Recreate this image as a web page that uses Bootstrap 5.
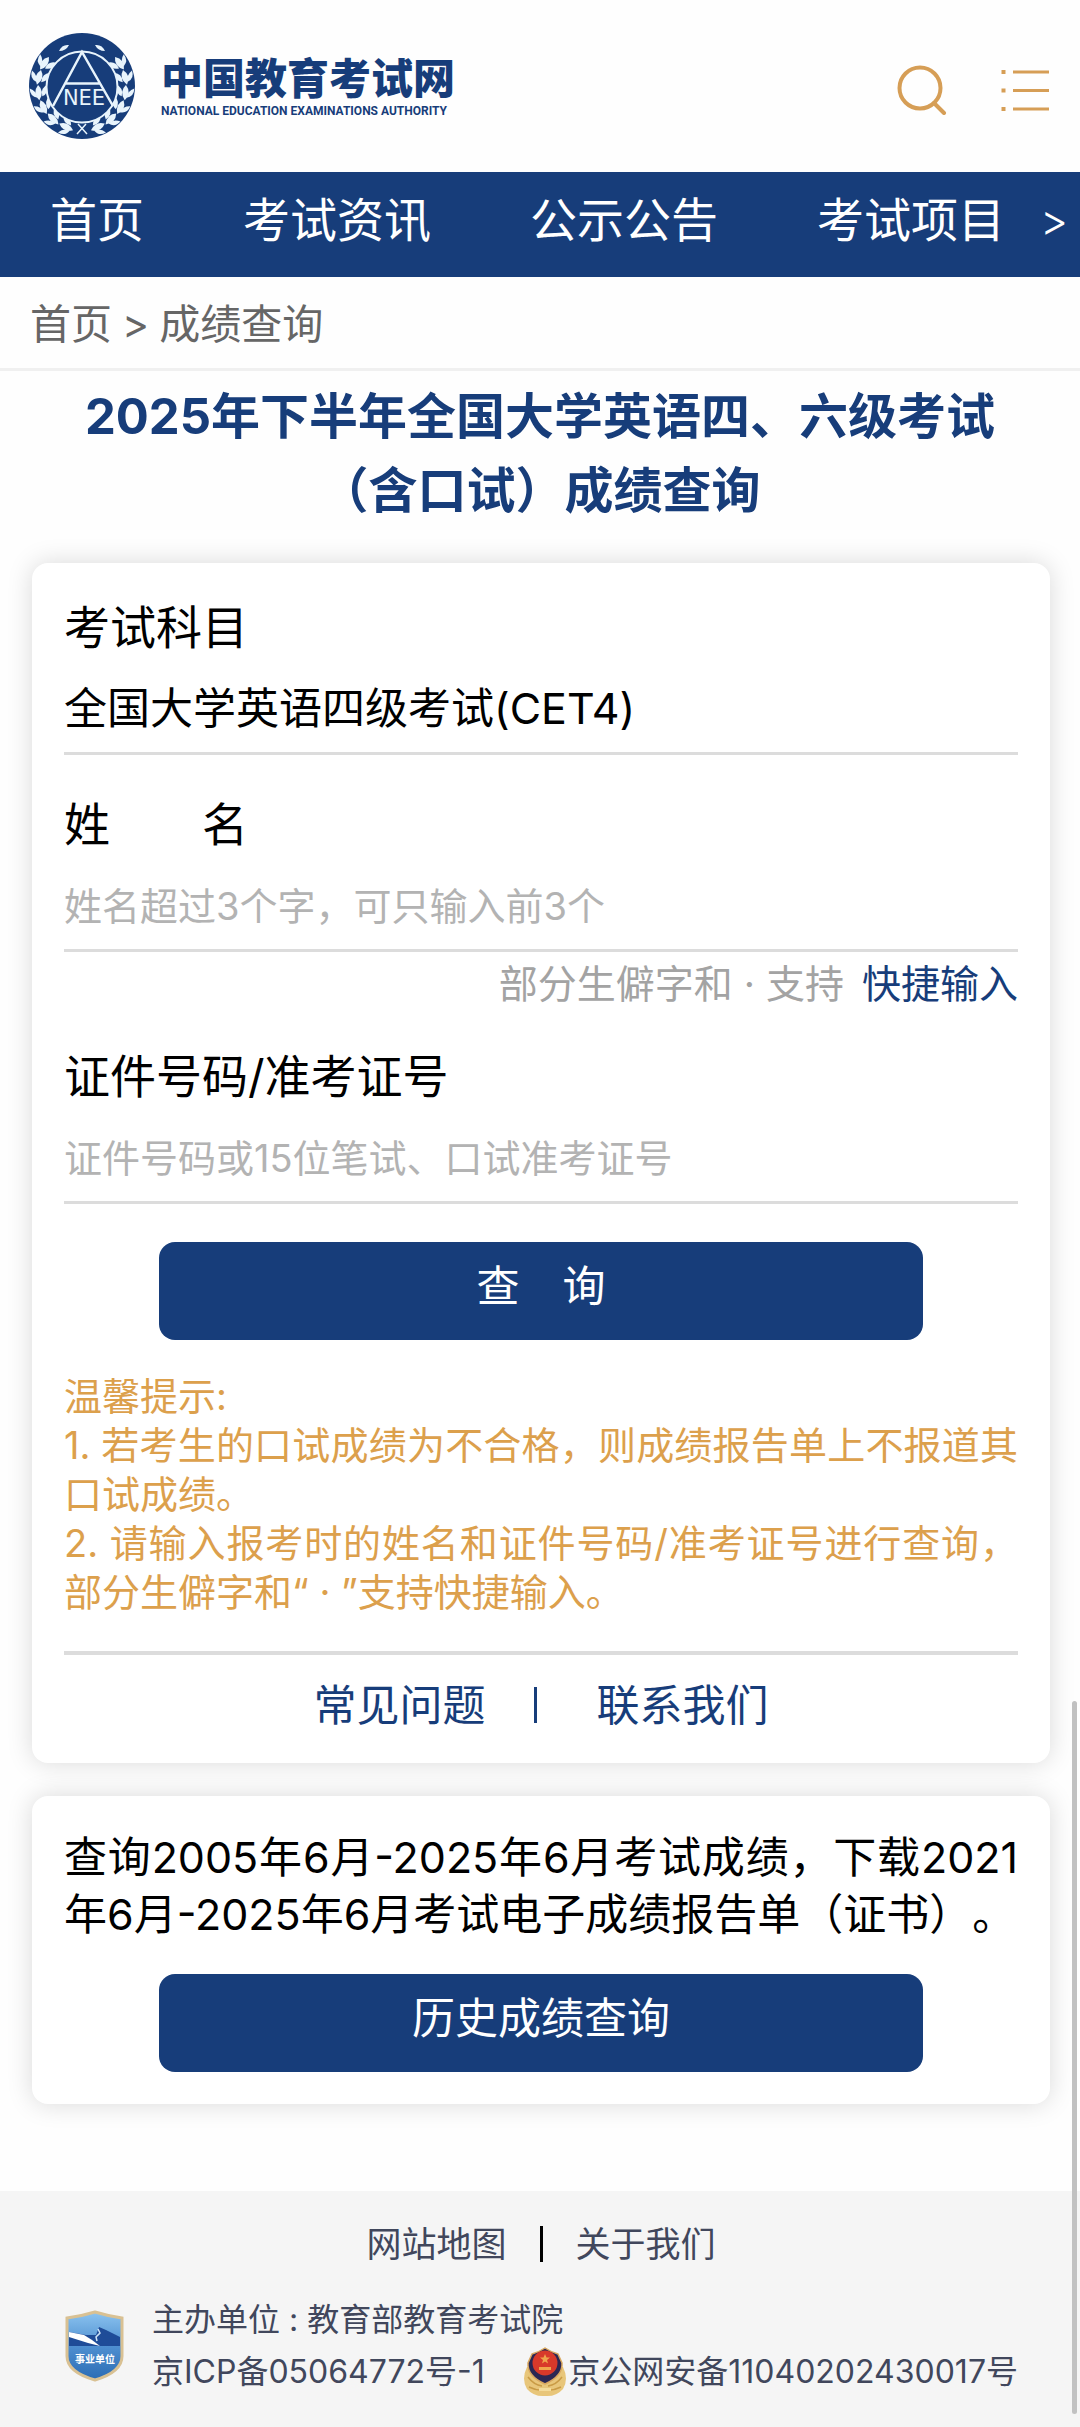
<!DOCTYPE html>
<html lang="zh-CN">
<head>
<meta charset="utf-8">
<meta name="viewport" content="width=device-width, initial-scale=1">
<title>成绩查询 - 中国教育考试网</title>
<link href="https://cdn.jsdelivr.net/npm/bootstrap@5.3.0/dist/css/bootstrap.min.css" rel="stylesheet">
<style>
  :root { --navy: #173d7a; --gold: #dca04c; --rule: #dcdcdc; }
  body { font-family: Inter, "Noto Sans CJK SC", sans-serif; color: #000; background: #fefefe; text-spacing-trim: space-all; }
  a { text-decoration: none; }

  .site-head { padding: 33px 31px 33px 29px; }
  .emblem { width: 106px; height: 106px; }
  .brand-link { gap: 26px; color: var(--navy); }
  .brand-cn { font: 900 42px/50px "Noto Sans CJK SC", sans-serif; }
  .brand-en { font: 700 12px/20px Roboto, sans-serif; }
  .head-tools { gap: 52px; padding-top: 8px; }
  .head-tools svg { width: 50px; height: 50px; }

  .main-nav { background: var(--navy); padding: 0 12px 10px 50px; height: 105px; }
  .main-nav ul { gap: 99px; }
  .main-nav a { color: #fff; font-size: 47px; line-height: 60px; }
  .main-nav .more { font-size: 43px; font-weight: 300; }

  .crumbs { color: #666; font-size: 41px; line-height: 60px; padding: 17px 30px 14px; border-bottom: 3px solid #f0f0f0; gap: 10px; }
  .crumbs a { color: inherit; }

  .page-title { color: var(--navy); font-size: 49px; line-height: 74px; font-weight: 700; padding: 9px 60px 35px; }
  main { padding: 0 30px 0 32px; }
  .panel { border: 0; border-radius: 16px; padding: 33px 32px 32px; background: #fff; box-shadow: 0 0 26px rgba(0,0,0,.15); }
  .query-panel { padding-top: 34px; padding-bottom: 28px; }
  .panel + .panel { margin-top: 33px; }

  .field-label { font-size: 46px; line-height: 60px; display: block; }
  .line-field { height: 98px; padding: 8px 0 0; border: 0; border-bottom: 3px solid var(--rule); border-radius: 0; font-size: 38px; color: #000; background: none; }
  .line-field::placeholder { color: #b3b3b3; opacity: 1; }
  select.line-field { font-size: 43px; }
  .field-gap { margin-top: 39px; }
  .hint { font-size: 39px; line-height: 60px; color: #a3a3a3; gap: 18px; margin: 2px 0 32px; }
  .hint a { color: var(--navy); }

  .btn-navy { --bs-btn-color: #fff; --bs-btn-bg: var(--navy); --bs-btn-hover-color: #fff; --bs-btn-hover-bg: #102f61; width: 80%; height: 98px; border: 0; border-radius: 16px; font-size: 43px; line-height: 60px; padding: 0 0 10px; }
  .query-btn { margin-top: 38px; }
  .tips { color: var(--gold); font-size: 38px; line-height: 49px; text-align: justify; margin: 32px 0 34px; }
  .help-links { border-top: 4px solid var(--rule); padding-top: 20px; font-size: 43px; line-height: 60px; gap: 48px; }
  .help-links a { color: var(--navy); }
  .help-links .bar { width: 3px; height: 36px; margin-right: 12px; background: var(--navy); }
  .history { font-size: 43px; line-height: 57px; text-align: justify; margin-bottom: 31px; }

  .site-foot { background: #f5f5f5; color: #41475c; margin-top: 87px; padding: 28px 62px 29px 64px; font-size: 32px; line-height: 52px; }
  .site-foot a { color: inherit; }
  .foot-links { font-size: 35px; line-height: 50px; gap: 33px; margin-bottom: 25px; }
  .foot-links .bar { width: 3px; height: 36px; background: #000; }
  .org-badge { width: 60px; height: 72px; }
  .police { width: 46px; height: 50px; }
  .scroll-thumb { right: 3px; top: 1701px; bottom: 13px; width: 5px; background: #c1c1c1; border-radius: 3px; }
</style>
</head>
<body class="position-relative">

<header class="site-head d-flex align-items-center justify-content-between">
  <a href="#" class="brand-link d-flex align-items-center">
    <svg class="emblem" viewBox="0 0 106 106" aria-hidden="true">
      <defs>
        <g id="leaf">
          <path d="M51 98 q7 -8 15 -3 q-6 8 -15 3z"/>
          <path d="M54 94 q1 -7 10 -9 q-1 9 -10 9z"/>
          <path d="M54 99 q7 -1 11 5 q-8 2 -11 -5z"/>
        </g>
        <g id="branch">
          <use href="#leaf" transform="rotate(-14 53 53)"/>
          <use href="#leaf" transform="rotate(-34 53 53)"/>
          <use href="#leaf" transform="rotate(-54 53 53)"/>
          <use href="#leaf" transform="rotate(-74 53 53)"/>
          <use href="#leaf" transform="rotate(-94 53 53)"/>
          <use href="#leaf" transform="rotate(-114 53 53)"/>
          <path d="M66 12 q7 -1 10 6 q-7 0 -10 -6z"/>
        </g>
      </defs>
      <circle cx="53" cy="53" r="53" fill="#173d7a"/>
      <g fill="#e8f4fc">
        <use href="#branch"/>
        <use href="#branch" transform="translate(106 0) scale(-1 1)"/>
      </g>
      <g fill="none" stroke="#e8f4fc">
        <circle cx="53" cy="54" r="35.500" fill="#173d7a" stroke-width="2"/>
        <path d="M24 73 L53 19 L84 73 M36 50.500 H71" stroke-width="2.500"/>
        <path d="M48 101 L57 91 M58 101 L49 91" stroke-width="1.500"/>
      </g>
      <text x="55" y="72" text-anchor="middle" font-family="DejaVu Sans, sans-serif" font-size="21" fill="#e8f4fc">NEE</text>
    </svg>
    <span class="d-flex flex-column">
      <span class="brand-cn">中国教育考试网</span>
      <span class="brand-en">NATIONAL EDUCATION EXAMINATIONS AUTHORITY</span>
    </span>
  </a>
  <div class="head-tools d-flex">
    <button type="button" class="btn p-0 border-0 lh-1" aria-label="搜索">
      <svg viewBox="0 0 50 50" fill="none" stroke="#d69e56" stroke-width="4" stroke-linecap="round"><circle cx="23" cy="23" r="20.500"/><path d="M37 38 L47 48"/></svg>
    </button>
    <button type="button" class="btn p-0 border-0 lh-1" aria-label="菜单">
      <svg viewBox="0 0 50 50" fill="none" stroke="#d69e56" stroke-width="3"><path d="M14 7 H50 M14 25.500 H50 M14 44 H50"/><path d="M2.500 7 h4 M2.500 25.500 h4 M2.500 44 h4" stroke-width="4"/></svg>
    </button>
  </div>
</header>

<nav class="main-nav d-flex align-items-center justify-content-between text-nowrap">
  <ul class="list-unstyled d-flex mb-0">
    <li><a href="#">首页</a></li>
    <li><a href="#">考试资讯</a></li>
    <li><a href="#">公示公告</a></li>
    <li><a href="#">考试项目</a></li>
  </ul>
  <a href="#" class="more">&gt;</a>
</nav>

<div class="crumbs d-flex">
  <a href="#">首页</a><span>&gt;</span><span>成绩查询</span>
</div>

<h1 class="page-title text-center mb-0">2025年下半年全国大学英语四、六级考试（含口试）成绩查询</h1>

<main>
  <section class="card panel query-panel">
    <form>
      <label class="field-label" for="subject">考试科目</label>
      <select id="subject" class="form-select line-field">
        <option>全国大学英语四级考试(CET4)</option>
      </select>

      <label class="field-label field-gap" for="realname">姓　　名</label>
      <input id="realname" type="text" class="form-control line-field" placeholder="姓名超过3个字，可只输入前3个">
      <div class="hint d-flex justify-content-end">
        <span>部分生僻字和 · 支持</span><a href="#">快捷输入</a>
      </div>

      <label class="field-label" for="idnum">证件号码/准考证号</label>
      <input id="idnum" type="text" class="form-control line-field" placeholder="证件号码或15位笔试、口试准考证号">

      <button type="button" class="btn btn-navy d-block mx-auto query-btn">查　询</button>
    </form>

    <div class="tips">
      <div>温馨提示:</div>
      <div>1. 若考生的口试成绩为不合格，则成绩报告单上不报道其口试成绩。</div>
      <div>2. 请输入报考时的姓名和证件号码/准考证号进行查询，部分生僻字和“ · ”支持快捷输入。</div>
    </div>

    <div class="help-links d-flex justify-content-center align-items-center">
      <a href="#">常见问题</a><span class="bar"></span><a href="#">联系我们</a>
    </div>
  </section>

  <section class="card panel">
    <p class="history">查询2005年6月-2025年6月考试成绩，下载2021年6月-2025年6月考试电子成绩报告单（证书）。</p>
    <button type="button" class="btn btn-navy d-block mx-auto">历史成绩查询</button>
  </section>
</main>

<footer class="site-foot">
  <div class="foot-links d-flex justify-content-center align-items-center">
    <a href="#">网站地图</a><span class="bar"></span><a href="#">关于我们</a>
  </div>
  <div class="d-flex align-items-center text-nowrap">
    <svg class="org-badge flex-shrink-0" viewBox="0 0 60 72" aria-hidden="true">
      <defs><linearGradient id="sky" x1="0" y1="0" x2="0" y2="1"><stop offset="0" stop-color="#8cc4f0"/><stop offset=".5" stop-color="#4f8fd0"/><stop offset="1" stop-color="#2b6cb4"/></linearGradient></defs>
      <path d="M3 8 Q18 6 31 2 Q44 6 58 8 V46 Q58 62 31 70 Q3 62 3 46 Z" fill="url(#sky)" stroke="#d9c193" stroke-width="3"/>
      <path d="M5 36 V22 L22 25 L32 25 L35 17 L42 20 L48 23 L56 27 V36 Z" fill="#1f4c98"/>
      <path d="M5 22 L20 25 L28 30 L36 36 L24 33 L5 27 Z" fill="#fff"/>
      <path d="M34 19 L36 23 L32 27 L33 31" fill="none" stroke="#cfe4f7" stroke-width="1.500"/>
      <text x="31" y="53" text-anchor="middle" font-family="Noto Sans CJK SC, sans-serif" font-weight="700" font-size="10" fill="#fff">事业单位</text>
    </svg>
    <div class="flex-grow-1 ms-4 ps-1">
      <div>主办单位 : 教育部教育考试院</div>
      <div class="d-flex justify-content-between">
        <a href="#">京ICP备05064772号-1</a>
        <a href="#" class="d-flex align-items-center">
          <svg class="police" viewBox="0 0 46 50" aria-hidden="true">
            <path d="M5 20 Q-1 32 5 42 Q12 50 23 49 Q34 50 41 42 Q47 32 41 20 Z" fill="#e8c67a"/>
            <path d="M6 30 q6 8 14 9 M40 30 q-6 8 -14 9 M7 40 q8 4 16 3 q8 1 16 -3" fill="none" stroke="#c99b45" stroke-width="1.500"/>
            <path d="M23 1 Q29 5 36 7 L40 16 Q41 29 23 37 Q5 29 6 16 L10 7 Q17 5 23 1Z" fill="#2b2753" stroke="#d9a860" stroke-width="1.500"/>
            <circle cx="23" cy="16" r="12.500" fill="#d8392a"/>
            <path d="M23 7 l1.500 3.500 h3.500 l-3 2.500 1 3.500 -3 -2 -3 2 1 -3.500 -3 -2.500 h3.500z M17 20 h12 v3 h-12z" fill="#f0a54c"/>
            <path d="M17 41 h12 v3 h-12z" fill="#f4dc9c"/>
          </svg><span>京公网安备11040202430017号</span>
        </a>
      </div>
    </div>
  </div>
</footer>

<div class="scroll-thumb position-absolute" aria-hidden="true"></div>
<script src="https://cdn.jsdelivr.net/npm/bootstrap@5.3.0/dist/js/bootstrap.bundle.min.js"></script>
</body>
</html>
